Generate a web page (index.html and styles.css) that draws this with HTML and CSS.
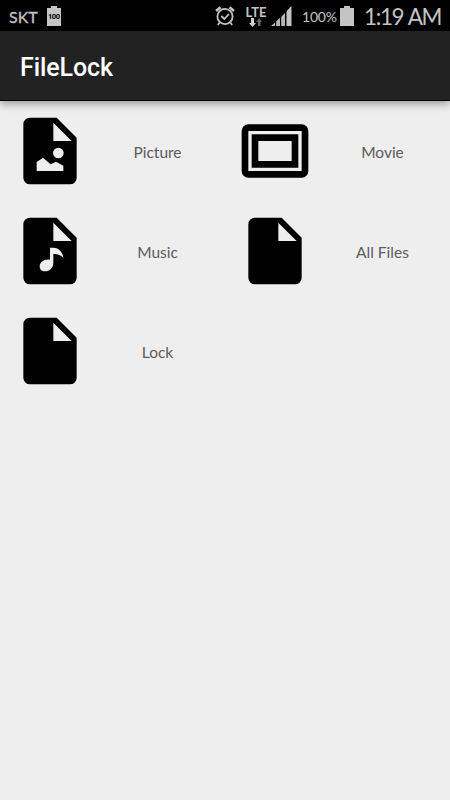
FILE: index.html
```
<!DOCTYPE html>
<html lang="en">
<head>
    <meta charset="UTF-8">
    <meta name="viewport" content="width=device-width, initial-scale=1.0">
    <title>FileLock</title>
    <link rel="stylesheet" href="styles.css">
</head>
<body>

<div class="status-bar">
    <span class="carrier">SKT</span>
    <svg class="battery-full" width="14" height="20" viewBox="0 0 14 20">
        <path fill="#c4c4c4" d="M4 0h6v2h4v18H0V2h4z"/>
        <text x="7" y="13.4" text-anchor="middle" textLength="12">100</text>
    </svg>
    <svg class="alarm" width="20" height="20" viewBox="0 0 20 20" fill="none" stroke="#c4c4c4" stroke-width="1.8">
        <circle cx="10" cy="10.5" r="7.6"/>
        <path d="M6.3 10l3 3 4.7-5M4.7 16.5L2.8 19M15.3 16.5l1.9 2.5"/>
        <path stroke-width="2.6" d="M1 5L5.5 1.3M19 5l-4.5-3.7"/>
    </svg>
    <div class="network">
        <span class="lte">LTE</span>
        <svg width="16" height="9" viewBox="0 0 16 9">
            <path fill="#d0d0d0" d="M3 0h3v5h2L4.5 9 1 5h2z"/>
            <path fill="#666" d="M10 8V4H8l3.2-4L14 4h-1.5v4z"/>
        </svg>
    </div>
    <svg class="signal" width="21" height="20" viewBox="0 0 21 20">
        <path fill="#b4b4b4" d="M0 20l4-3.5V20zM5 15.5l4-3.7V20H5zM10 11l4-4v13h-4zM15 6l1-1v15h-1z"/>
        <path fill="#c4c4c4" d="M16 4.5L20.5 0v20H16z"/>
        <path stroke="#000" stroke-width=".8" d="M4.7 9v11M9.7 7v13M15 4v16"/>
    </svg>
    <span class="percent">100%</span>
    <svg class="battery" width="14" height="20" viewBox="0 0 14 20">
        <path fill="#c4c4c4" d="M4 0h6v2h4v18H0V2h4z"/>
    </svg>
    <span class="clock">1:19 AM</span>
</div>

<div class="action-bar">
    <h1>FileLock</h1>
</div>

<div class="menu">
    <div class="item">
        <svg class="icon" viewBox="0 0 24 24">
            <path fill-rule="evenodd" d="M6 2a2 2 0 0 0-2 2v16a2 2 0 0 0 2 2h12a2 2 0 0 0 2-2V8l-6-6zM13 3.5L18.5 9H13zM8 15.3L9.9 14l2.3 2 1.6-.8 2.2 1.2V18H8zM16.1 12.6a1.6 1.6 0 1 0-3.2 0 1.6 1.6 0 1 0 3.2 0z"/>
        </svg>
        <span class="label">Picture</span>
    </div>
    <div class="item">
        <svg class="icon" viewBox="0 0 24 24">
            <path fill-rule="evenodd" d="M4 4h16a2 2 0 0 1 2 2v12a2 2 0 0 1-2 2H4a2 2 0 0 1-2-2V6a2 2 0 0 1 2-2zM4 6v12h16V6zM5 7h14v10H5zM7 9v6h10V9z"/>
        </svg>
        <span class="label">Movie</span>
    </div>
    <div class="item">
        <svg class="icon" viewBox="0 0 24 24">
            <path fill-rule="evenodd" d="M6 2a2 2 0 0 0-2 2v16a2 2 0 0 0 2 2h12a2 2 0 0 0 2-2V8l-6-6zM13 3.5L18.5 9H13zM12 11v3.6c-1.7-.3-3.1.7-3.1 2 0 .9.6 1.5 1.6 1.5 1.4 0 2.5-1.1 2.5-2.6v-2.6c1.2 0 2.2.3 3 1.1-.2-1.8-1.5-3-3-3z"/>
        </svg>
        <span class="label">Music</span>
    </div>
    <div class="item">
        <svg class="icon" viewBox="0 0 24 24">
            <path fill-rule="evenodd" d="M6 2a2 2 0 0 0-2 2v16a2 2 0 0 0 2 2h12a2 2 0 0 0 2-2V8l-6-6zM13 3.5L18.5 9H13z"/>
        </svg>
        <span class="label">All Files</span>
    </div>
    <div class="item">
        <svg class="icon" viewBox="0 0 24 24">
            <path fill-rule="evenodd" d="M6 2a2 2 0 0 0-2 2v16a2 2 0 0 0 2 2h12a2 2 0 0 0 2-2V8l-6-6zM13 3.5L18.5 9H13z"/>
        </svg>
        <span class="label">Lock</span>
    </div>
</div>

</body>
</html>
```
FILE: styles.css
```
body {
    margin: 0;
    min-height: 800px;
    background-color: #eee;
    font-family: Lato, sans-serif;
}
.status-bar {
    display: flex;
    align-items: center;
    box-sizing: border-box;
    height: 31px;
    padding: 1px 0 0 9px;
    background-color: #000;
    color: #c4c4c4;
    white-space: nowrap;
}
.status-bar > * {
    flex-shrink: 0;
}
.carrier {
    width: 38px;
    font-size: 16px;
    -webkit-text-stroke: 0.3px #c4c4c4;
}
.battery-full text {
    font: bold 7.5px Roboto, sans-serif;
    fill: #000;
}
.alarm {
    margin-left: 154px;
}
.network {
    display: flex;
    flex-direction: column;
    align-items: center;
    width: 22px;
    margin-left: 10px;
}
.lte {
    font-size: 13px;
    font-weight: bold;
    line-height: 12px;
}
.signal {
    margin-left: 4px;
}
.percent {
    width: 38px;
    margin-left: 10px;
    font-size: 14px;
    letter-spacing: -0.2px;
}
.clock {
    margin-left: 10px;
    font-size: 22.5px;
    letter-spacing: -1.4px;
    word-spacing: 1px;
}
.action-bar {
    display: flex;
    align-items: center;
    box-sizing: border-box;
    height: 70px;
    padding: 4px 20px 0;
    background-color: #222;
    border-bottom: 1px solid #000;
    box-shadow: 0 3px 8px rgba(0, 0, 0, 0.35);
}
h1 {
    margin: 0;
    color: #fff;
    font-family: Roboto, sans-serif;
    font-size: 25px;
    font-weight: 500;
    letter-spacing: -0.1px;
}
.menu {
    display: grid;
    grid-template-columns: 1fr 1fr;
    grid-auto-rows: 100px;
}
.item {
    display: flex;
    align-items: center;
    padding: 0 10px;
}
.icon {
    width: 80px;
    height: 80px;
    margin-right: 10px;
}
.label {
    flex: 1;
    padding-top: 2px;
    text-align: center;
    color: #5c5c5c;
    font-size: 15.5px;
}
```
